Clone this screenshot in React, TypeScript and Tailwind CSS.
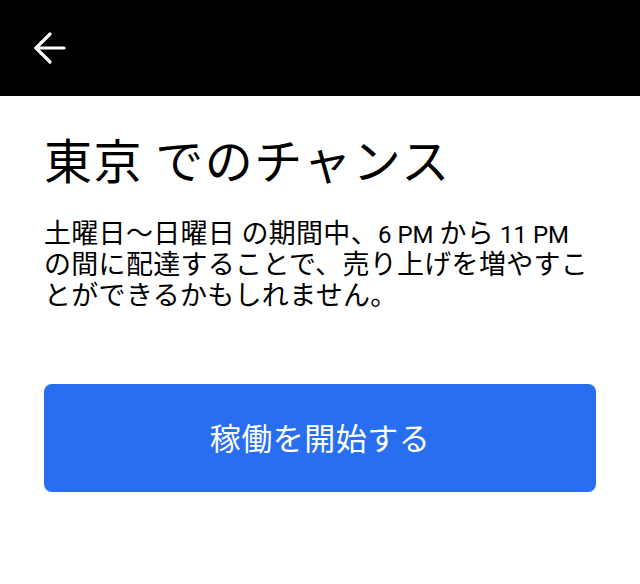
import { ArrowLeft } from 'lucide-react';

export default function App() {
  return (
    <div
      className="min-h-screen w-full bg-white text-black"
      style={{ fontFamily: '"Noto Sans CJK JP", Roboto, sans-serif' }}
    >
      <header className="h-[96px] bg-black flex items-center px-[26px]">
        <button className="text-white">
          <ArrowLeft size={48} strokeWidth={1.6} />
        </button>
      </header>

      <main className="px-[44px] pt-[33px]">
        <h1 className="text-[48px] leading-[58px] font-normal tracking-[1.5px]">東京 でのチャンス</h1>
        <p className="mt-[29px] text-[27px] leading-[31px] tracking-[0.3px]">
          土曜日〜日曜日 の期間中、
          <span className="font-['Roboto'] text-[24px] leading-none tracking-normal">6 PM </span>から
          <span className="font-['Roboto'] text-[24px] leading-none tracking-normal"> 11 PM </span>
          の間に配達することで、売り上げを増やすことができるかもしれません。
        </p>
        <button className="mt-[75px] w-full h-[108px] rounded-lg bg-[#276ef1] text-white text-[31px] leading-none tracking-[0.5px] pb-[4px]">
          稼働を開始する
        </button>
      </main>
    </div>
  );
}
